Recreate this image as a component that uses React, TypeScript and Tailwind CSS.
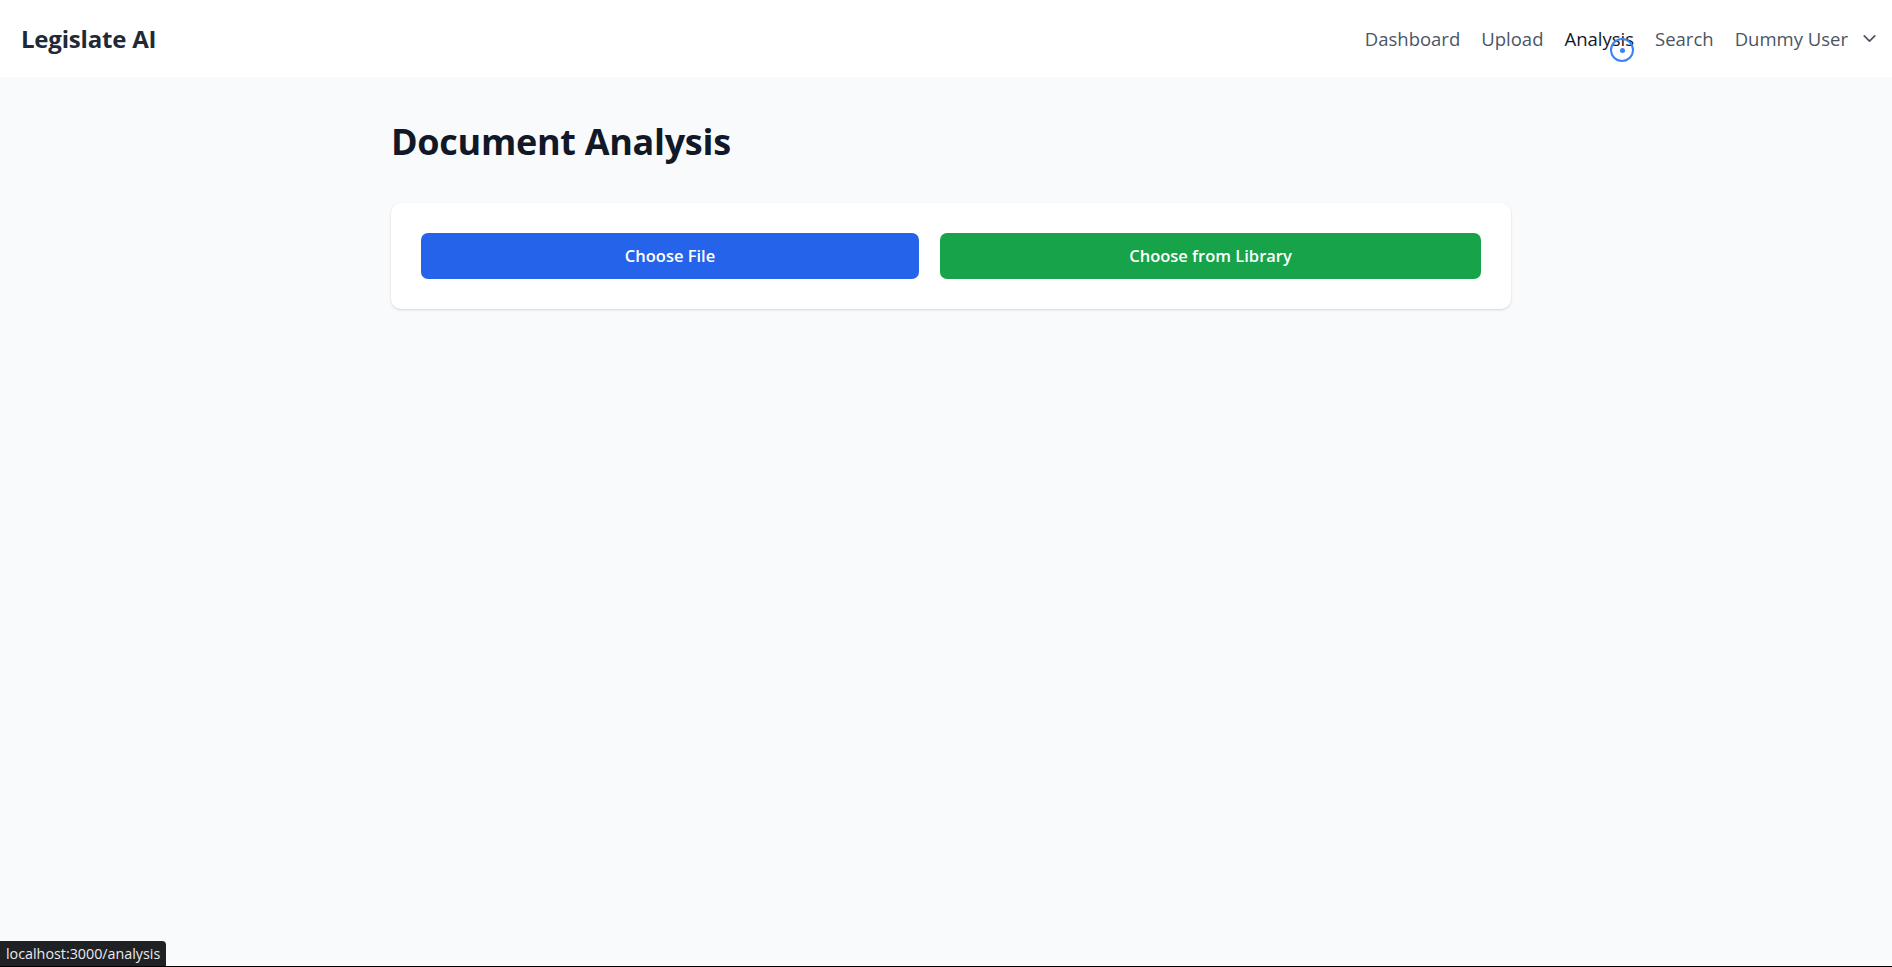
import { ChevronDown } from "lucide-react";

const navLinks = ["Dashboard", "Upload", "Analysis", "Search"];

export default function App() {
  return (
    <div
      className="relative min-h-screen bg-[#f9fafb]"
      style={{ fontFamily: '"Open Sans", "Noto Sans", sans-serif' }}
    >
      {/* top bar */}
      <header className="flex h-[77px] items-center justify-between bg-white pl-[21px] pr-[12px]">
        <span className="text-[24px] font-bold tracking-[-0.2px] text-[#1f2937]">Legislate AI</span>
        <nav className="flex items-center gap-[21px] text-[18.5px] text-[#4b5563]">
          {navLinks.map((link) => (
            <a
              key={link}
              href="#"
              className={link === "Analysis" ? "text-[#111827]" : "hover:text-[#111827]"}
            >
              {link}
            </a>
          ))}
          <button className="flex items-center gap-[11px] text-[#4b5563]">
            <span>Dummy User</span>
            <ChevronDown className="h-[21px] w-[21px]" strokeWidth={2} />
          </button>
        </nav>
      </header>

      <main className="mx-auto w-[1130px] pl-[10px]">
        <h1 className="mt-[41px] text-[36px] leading-[48px] font-bold tracking-[-0.3px] text-[#111827]">
          Document Analysis
        </h1>

        <div className="mt-[37px] grid grid-cols-[498fr_541fr] gap-[21px] rounded-[10px] bg-white p-[30px] shadow-[0_1px_3px_rgba(0,0,0,0.1),0_1px_2px_rgba(0,0,0,0.06)]">
          <button className="h-[46px] rounded-[7px] bg-[#2563eb] px-[20px] text-[16.5px] font-semibold text-white">
            Choose File
          </button>
          <button className="h-[46px] rounded-[7px] bg-[#16a34a] px-[20px] text-[16.5px] font-semibold text-white">
            Choose from Library
          </button>
        </div>
      </main>

      {/* pointer highlight */}
      <div className="pointer-events-none absolute left-[1610px] top-[38px] flex h-[24px] w-[24px] items-center justify-center rounded-full border-2 border-[#3b82f6]">
        <div className="h-[5px] w-[5px] rounded-full bg-[#3b82f6]" />
      </div>

      {/* browser status bar */}
      <div className="absolute bottom-0 left-0 rounded-tr-[4px] bg-[#202124] px-[6px] pb-[3px] pt-[2px] text-[14.3px] leading-[21px] text-[#e8eaed]">
        localhost:3000/analysis
      </div>
      <div className="absolute bottom-0 left-0 right-0 h-[1px] bg-black" />
    </div>
  );
}
